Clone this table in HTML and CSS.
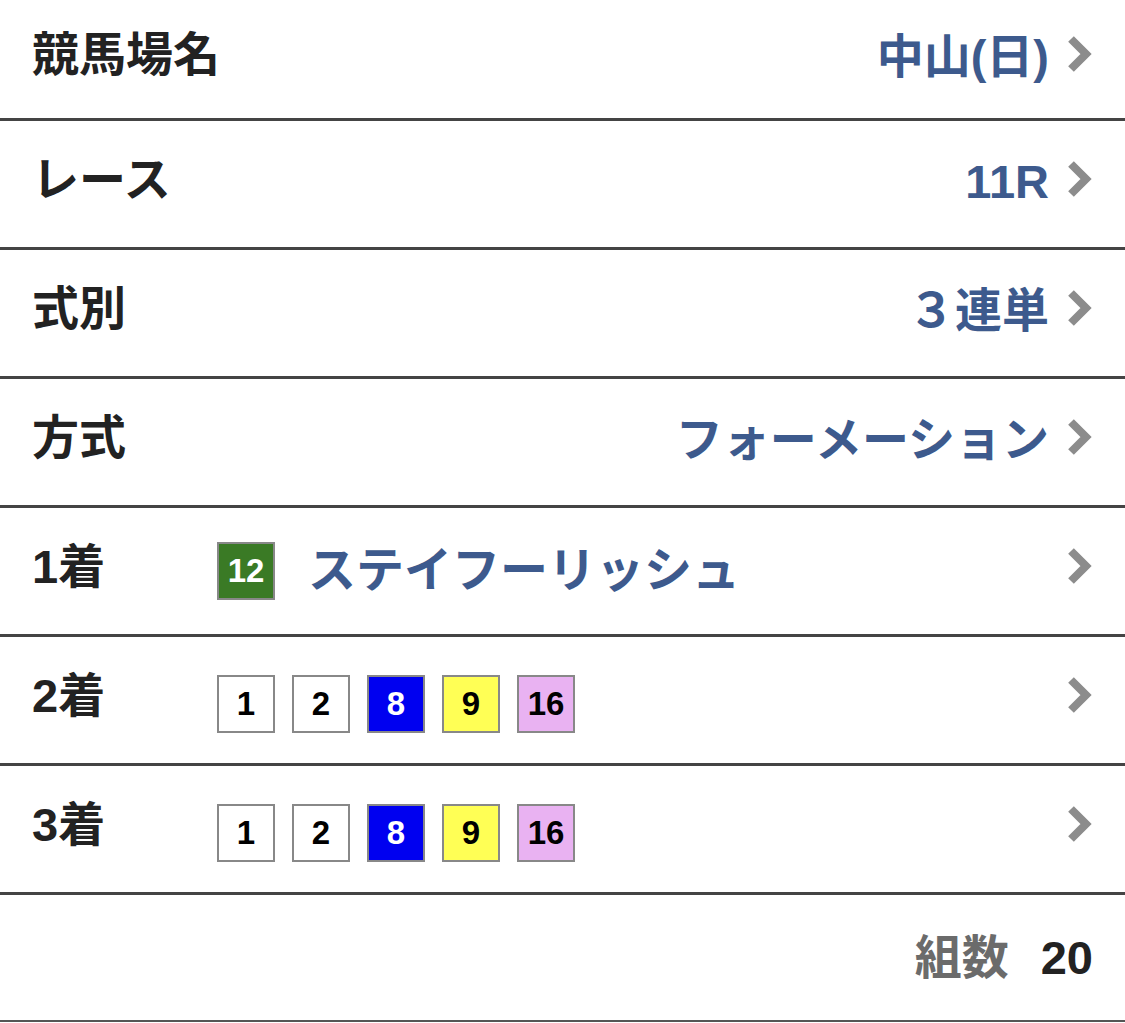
FILE: index.html
```html
<!DOCTYPE html>
<html lang="ja">
<head>
<meta charset="utf-8">
<link rel="stylesheet" href="styles.css">
</head>
<body>
<div class="list">
  <div class="row first">
    <div class="label">競馬場名</div>
    <div class="value">中山(日)</div>
    <svg class="chev" viewBox="0 0 26 36"><polyline points="4,3 19,18 4,33" /></svg>
  </div>
  <div class="row">
    <div class="label">レース</div>
    <div class="value">11R</div>
    <svg class="chev" viewBox="0 0 26 36"><polyline points="4,3 19,18 4,33" /></svg>
  </div>
  <div class="row">
    <div class="label">式別</div>
    <div class="value">３連単</div>
    <svg class="chev" viewBox="0 0 26 36"><polyline points="4,3 19,18 4,33" /></svg>
  </div>
  <div class="row">
    <div class="label">方式</div>
    <div class="value">フォーメーション</div>
    <svg class="chev" viewBox="0 0 26 36"><polyline points="4,3 19,18 4,33" /></svg>
  </div>
  <div class="row">
    <div class="label">1着</div>
    <div class="picks winner">
      <span class="num green">12</span>
      <span class="horse">ステイフーリッシュ</span>
    </div>
    <svg class="chev" viewBox="0 0 26 36"><polyline points="4,3 19,18 4,33" /></svg>
  </div>
  <div class="row">
    <div class="label">2着</div>
    <div class="picks">
      <span class="num white">1</span>
      <span class="num white">2</span>
      <span class="num blue">8</span>
      <span class="num yellow">9</span>
      <span class="num pink">16</span>
    </div>
    <svg class="chev" viewBox="0 0 26 36"><polyline points="4,3 19,18 4,33" /></svg>
  </div>
  <div class="row">
    <div class="label">3着</div>
    <div class="picks">
      <span class="num white">1</span>
      <span class="num white">2</span>
      <span class="num blue">8</span>
      <span class="num yellow">9</span>
      <span class="num pink">16</span>
    </div>
    <svg class="chev" viewBox="0 0 26 36"><polyline points="4,3 19,18 4,33" /></svg>
  </div>
  <div class="row total">
    <span class="total-label">組数</span>
    <span class="total-value">20</span>
  </div>
</div>
</body>
</html>
```
FILE: styles.css
```css
html, body {
  margin: 0;
  padding: 0;
  background: #fff;
}
body {
  font-family: "Liberation Sans", "Noto Sans CJK JP", sans-serif;
  font-weight: bold;
  color: #222;
}
.list {
  width: 1125px;
}
.row {
  display: flex;
  align-items: center;
  height: 126px;
  padding: 0 32px;
  border-bottom: 3px solid #444;
  box-sizing: content-box;
}
.row.first {
  height: 118px;
}
.label {
  width: 185px;
  flex: none;
  font-size: 47px;
  line-height: 1;
  margin-top: -10px;
  white-space: nowrap;
}
.value {
  margin-left: auto;
  font-size: 47px;
  line-height: 1;
  color: #3d5a8d;
  margin-top: -6px;
  white-space: nowrap;
}
.chev {
  width: 26px;
  height: 36px;
  margin-left: 18px;
  flex: none;
  margin-top: -10px;
}
.chev polyline {
  fill: none;
  stroke: #8c8c8c;
  stroke-width: 8;
  stroke-linecap: butt;
  stroke-linejoin: miter;
}
.picks {
  display: flex;
  align-items: center;
  gap: 17px;
  flex: 1;
  margin-top: 8px;
}
.picks.winner {
  margin-top: 0;
}
.num {
  width: 54px;
  height: 54px;
  border: 2px solid #888;
  display: flex;
  align-items: center;
  justify-content: center;
  font-size: 33px;
  color: #000;
  flex: none;
}
.num.green { background: #3a7a25; color: #fff; }
.num.white { background: #fff; }
.num.blue { background: #0000f0; color: #fff; }
.num.yellow { background: #ffff55; }
.num.pink { background: #e9b2f2; }
.horse {
  margin-left: 16px;
  font-size: 48px;
  color: #3d5a8d;
  line-height: 1;
  white-space: nowrap;
}
.row.total {
  height: 125px;
  justify-content: flex-end;
  border-bottom: 2px solid #555;
  gap: 32px;
}
.total-label {
  font-size: 47px;
  color: #6b6b6b;
  line-height: 1;
}
.total-value {
  font-size: 47px;
  color: #222;
  line-height: 1;
}
```
